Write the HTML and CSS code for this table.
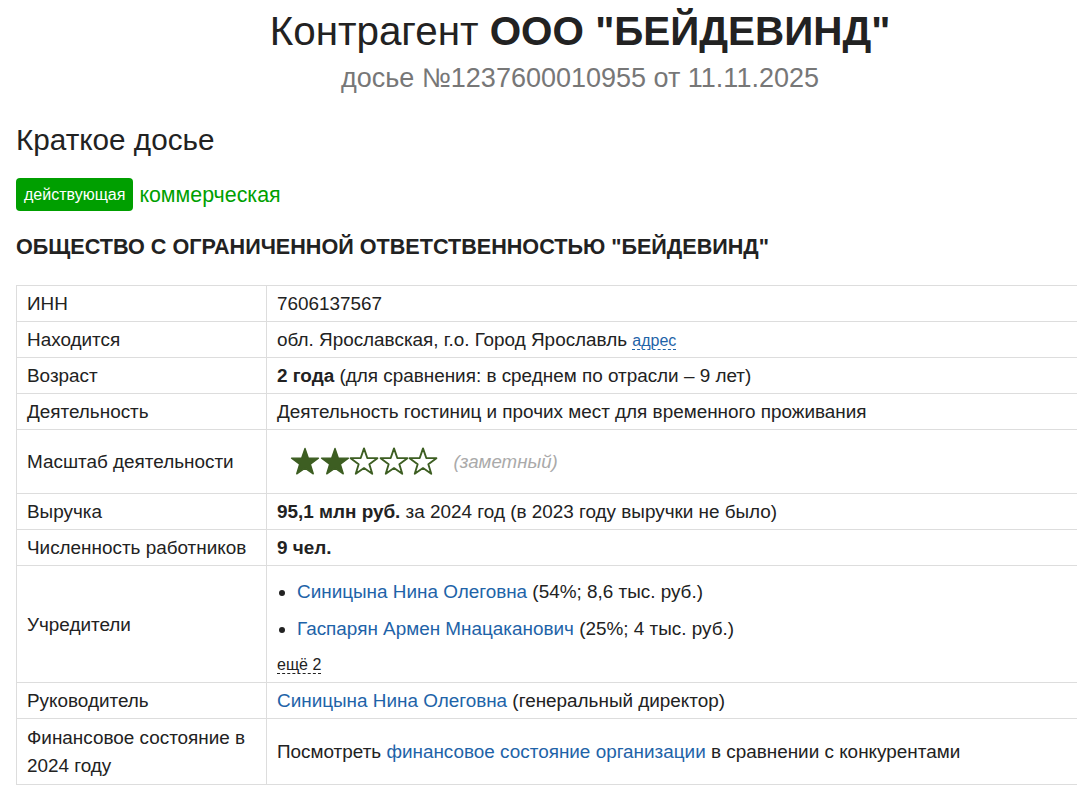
FILE: index.html
```html
<!DOCTYPE html>
<html lang="ru">
<head>
<meta charset="utf-8">
<title>Контрагент ООО "БЕЙДЕВИНД"</title>
<link rel="stylesheet" href="styles.css">
</head>
<body>
<div class="page">
  <header class="head">
    <h1 class="title">Контрагент <b>ООО "БЕЙДЕВИНД"</b></h1>
    <div class="subtitle">досье №1237600010955 от 11.11.2025</div>
  </header>

  <h2 class="section">Краткое досье</h2>

  <div class="status">
    <span class="badge">действующая</span>
    <span class="kind">коммерческая</span>
  </div>

  <h3 class="fullname">ОБЩЕСТВО С ОГРАНИЧЕННОЙ ОТВЕТСТВЕННОСТЬЮ "БЕЙДЕВИНД"</h3>

  <table class="info">
    <tr><td class="k">ИНН</td><td>7606137567</td></tr>
    <tr><td class="k">Находится</td><td>обл. Ярославская, г.о. Город Ярославль <a class="dash link" href="#">адрес</a></td></tr>
    <tr><td class="k">Возраст</td><td><b>2 года</b> (для сравнения: в среднем по отрасли – 9 лет)</td></tr>
    <tr><td class="k">Деятельность</td><td>Деятельность гостиниц и прочих мест для временного проживания</td></tr>
    <tr><td class="k">Масштаб деятельности</td><td>
      <div class="scale">
        <span class="stars">
          <svg class="star" viewBox="-1 -1 32 31"><polygon class="full" points="15,0 18.5,10.2 29.3,10.4 20.7,16.9 23.8,27.1 15,21 6.2,27.1 9.3,16.9 0.7,10.4 11.5,10.2"/></svg>
          <svg class="star" viewBox="-1 -1 32 31"><polygon class="full" points="15,0 18.5,10.2 29.3,10.4 20.7,16.9 23.8,27.1 15,21 6.2,27.1 9.3,16.9 0.7,10.4 11.5,10.2"/></svg>
          <svg class="star" viewBox="-1 -1 32 31"><polygon class="empty" points="15,0 18.5,10.2 29.3,10.4 20.7,16.9 23.8,27.1 15,21 6.2,27.1 9.3,16.9 0.7,10.4 11.5,10.2"/></svg>
          <svg class="star" viewBox="-1 -1 32 31"><polygon class="empty" points="15,0 18.5,10.2 29.3,10.4 20.7,16.9 23.8,27.1 15,21 6.2,27.1 9.3,16.9 0.7,10.4 11.5,10.2"/></svg>
          <svg class="star" viewBox="-1 -1 32 31"><polygon class="empty" points="15,0 18.5,10.2 29.3,10.4 20.7,16.9 23.8,27.1 15,21 6.2,27.1 9.3,16.9 0.7,10.4 11.5,10.2"/></svg>
        </span>
        <span class="note">(заметный)</span>
      </div>
    </td></tr>
    <tr><td class="k">Выручка</td><td><b>95,1 млн руб.</b> за 2024 год (в 2023 году выручки не было)</td></tr>
    <tr><td class="k">Численность работников</td><td><b>9 чел.</b></td></tr>
    <tr><td class="k">Учредители</td><td>
      <ul class="founders">
        <li><a class="link" href="#">Синицына Нина Олеговна</a> (54%; 8,6 тыс. руб.)</li>
        <li><a class="link" href="#">Гаспарян Армен Мнацаканович</a> (25%; 4 тыс. руб.)</li>
      </ul>
      <div class="more"><span class="dash">ещё 2</span></div>
    </td></tr>
    <tr><td class="k">Руководитель</td><td><a class="link" href="#">Синицына Нина Олеговна</a> (генеральный директор)</td></tr>
    <tr><td class="k">Финансовое состояние в 2024 году</td><td class="tall">Посмотреть <a class="link" href="#">финансовое состояние организации</a> в сравнении с конкурентами</td></tr>
  </table>
</div>
</body>
</html>
```

FILE: styles.css
```css
html, body {
  margin: 0;
  padding: 0;
  overflow: hidden;
  background: #fff;
}
body {
  font-family: "Liberation Sans", Arial, sans-serif;
  color: #222;
  font-size: 18.9px;
}
.page {
  width: 1128px;
  padding: 0 16px;
}
.head {
  text-align: center;
  padding-top: 7px;
}
.title {
  margin: 0;
  font-size: 40.4px;
  font-weight: normal;
  line-height: 48px;
}
.title b {
  font-weight: bold;
}
.subtitle {
  font-size: 27px;
  color: #777;
  line-height: 36px;
  margin-top: 5px;
}
.section {
  margin: 26px 0 0 0;
  font-size: 29.7px;
  font-weight: normal;
  line-height: 36px;
}
.status {
  margin-top: 20px;
  display: flex;
  align-items: center;
  gap: 6px;
}
.badge {
  background: #009f00;
  color: #fff;
  font-size: 16px;
  line-height: 33px;
  height: 33px;
  padding: 0 8px;
  border-radius: 4px;
}
.kind {
  color: #009f00;
  font-size: 21.4px;
  line-height: 24px;
}
.fullname {
  margin: 23px 0 0 0;
  font-size: 21.6px;
  font-weight: bold;
  line-height: 26px;
}
.info {
  margin-top: 25px;
  border-collapse: collapse;
  width: 1130px;
}
.info td {
  border: 1px solid #ddd;
  padding: 4px 10px 3px 10px;
  line-height: 28px;
  vertical-align: middle;
}
.info td.k {
  width: 229px;
}
.info td.tall {
  height: 58px;
}
.link {
  color: #1e63a8;
  text-decoration: none;
}
.dash {
  border-bottom: 1px dashed #1e63a8;
  font-size: 16px;
  line-height: 18px;
}
.more .dash {
  border-bottom-color: #222;
  color: #222;
}
.scale {
  display: flex;
  align-items: center;
  height: 56px;
  padding-left: 13px;
}
.stars {
  display: flex;
}
.star {
  width: 30px;
  height: 30px;
  margin-right: -0.5px;
}
.star .full {
  fill: #3d5e22;
  stroke: #3d5e22;
  stroke-width: 1.5;
  stroke-linejoin: round;
}
.star .empty {
  fill: #fff;
  stroke: #3d5e22;
  stroke-width: 2;
  stroke-linejoin: round;
}
.note {
  margin-left: 16px;
  color: #aaa;
  font-style: italic;
  font-size: 18.7px;
}
.founders {
  margin: 8px 0 0 0;
  padding-left: 20px;
}
.founders li {
  margin-bottom: 9px;
}
.more {
  line-height: 24px;
  padding-bottom: 3px;
}
```
